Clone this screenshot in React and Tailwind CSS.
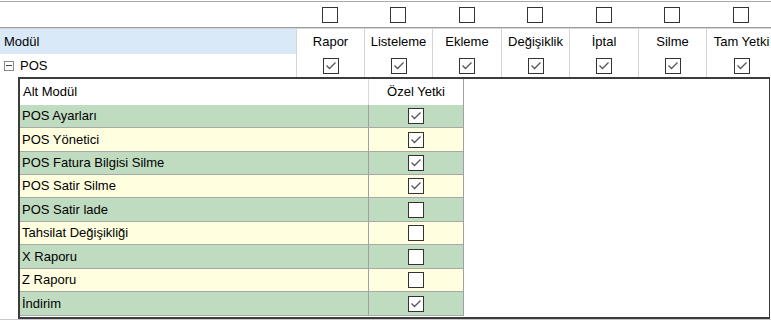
import React from 'react'

const columns = [
    { label: 'Rapor', w: 'w-[68px]' },
    { label: 'Listeleme', w: 'w-[68px]' },
    { label: 'Ekleme', w: 'w-[69px]' },
    { label: 'Değişiklik', w: 'w-[68px]' },
    { label: 'İptal', w: 'w-[69px]' },
    { label: 'Silme', w: 'w-[68px]' },
    { label: 'Tam Yetki', w: 'w-[70px]' },
]

const subModules = [
    { name: 'POS Ayarları', checked: true, h: 'h-[23px]' },
    { name: 'POS Yönetici', checked: true, h: 'h-[24px]' },
    { name: 'POS Fatura Bilgisi Silme', checked: true, h: 'h-[23px]' },
    { name: 'POS Satir Silme', checked: true, h: 'h-[23px]' },
    { name: 'POS Satir lade', checked: false, h: 'h-[24px]' },
    { name: 'Tahsilat Değişikliği', checked: false, h: 'h-[23px]' },
    { name: 'X Raporu', checked: false, h: 'h-[24px]' },
    { name: 'Z Raporu', checked: false, h: 'h-[23px]' },
    { name: 'İndirim', checked: true, h: 'h-[24px]' },
]

function CheckBox({ checked }) {
    return (
        <div className="w-4 h-4 border border-[#333] bg-white flex items-center justify-center">
            {checked && (
                <svg width="14" height="14" viewBox="0 0 14 14">
                    <path d="M2.5 6.5 L5.5 9.5 L11.5 3.5" fill="none" stroke="#555" strokeWidth="1.3" />
                </svg>
            )}
        </div>
    )
}

export default function App() {
    return (
        <div className="w-[771px] h-[320px] bg-white overflow-hidden text-[13px] text-black" style={{ fontFamily: '"Liberation Sans", Arial, sans-serif' }}>
            <div className="h-px"></div>
            <div className="border-t border-[#a8a8a8]"></div>

            {/* top select-all row */}
            <div className="flex h-[25px] w-[777px]">
                <div className="w-[296px]"></div>
                {columns.map((c) => (
                    <div key={c.label} className={`${c.w} flex items-center justify-center`}>
                        <CheckBox checked={false} />
                    </div>
                ))}
            </div>
            <div className="border-t border-[#9c9c9c]"></div>
            <div className="border-t border-[#d6d6d6]"></div>

            {/* header */}
            <div className="flex h-[25px] w-[777px]">
                <div className="w-[296px] bg-[#d9e9f8] flex items-center pl-[4px]">Modül</div>
                {columns.map((c) => (
                    <div key={c.label} className={`${c.w} border-l border-[#d4d4d4] flex items-center justify-center`}>
                        {c.label}
                    </div>
                ))}
            </div>

            {/* POS row */}
            <div className="flex h-[23px] w-[777px]">
                <div className="w-[296px] flex items-center pl-[4px] gap-[6px]">
                    <div className="w-[10px] h-[10px] border border-[#8a8a8a] flex items-center justify-center">
                        <div className="w-[6px] h-px bg-[#444]"></div>
                    </div>
                    <span>POS</span>
                </div>
                {columns.map((c) => (
                    <div key={c.label} className={`${c.w} border-l border-[#d4d4d4] flex items-center justify-center`}>
                        <CheckBox checked={true} />
                    </div>
                ))}
            </div>

            {/* detail panel */}
            <div className="ml-[18px] w-[752px] h-[242px] border-2 border-r border-[#3c3c3c] bg-white">
                <div className="w-[444px] border-r border-[#a0a0a0]">
                    <div className="flex h-[26px]">
                        <div className="w-[349px] flex items-center pl-[3px] border-r border-[#dadada]">Alt Modül</div>
                        <div className="flex-1 flex items-center justify-center">Özel Yetki</div>
                    </div>
                    {subModules.map((m, i) => (
                        <div
                            key={m.name}
                            className={`flex ${m.h} border-b border-[#a8a8a8] ${i % 2 === 0 ? 'bg-[#c0dcc0]' : 'bg-[#ffffe0]'}`}
                        >
                            <div className="w-[349px] flex items-center pl-[2px] border-r border-[#a0a0a0]">{m.name}</div>
                            <div className="flex-1 flex items-center justify-center">
                                <CheckBox checked={m.checked} />
                            </div>
                        </div>
                    ))}
                </div>
            </div>
            <div className="border-t border-[#c8c8c8]"></div>
        </div>
    )
}
